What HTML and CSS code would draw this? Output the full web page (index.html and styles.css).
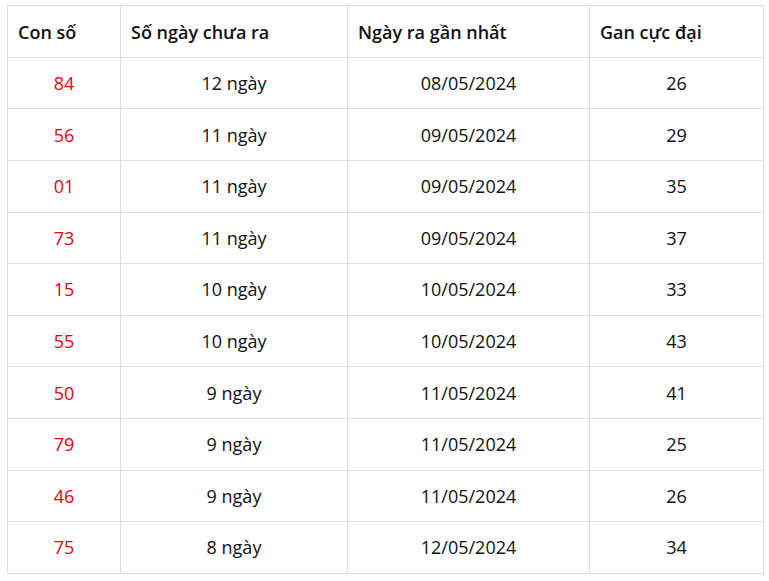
FILE: index.html
```html
<!DOCTYPE html>
<html lang="vi">
<head>
<meta charset="utf-8">
<title>Lô gan</title>
<link rel="stylesheet" href="styles.css">
</head>
<body>
<div class="wrap">
<table class="gan">
<colgroup>
<col class="c1"><col class="c2"><col class="c3"><col class="c4">
</colgroup>
<thead>
<tr><th>Con số</th><th>Số ngày chưa ra</th><th>Ngày ra gần nhất</th><th>Gan cực đại</th></tr>
</thead>
<tbody>
<tr><td class="num">84</td><td>12 ngày</td><td>08/05/2024</td><td>26</td></tr>
<tr><td class="num">56</td><td>11 ngày</td><td>09/05/2024</td><td>29</td></tr>
<tr><td class="num">01</td><td>11 ngày</td><td>09/05/2024</td><td>35</td></tr>
<tr><td class="num">73</td><td>11 ngày</td><td>09/05/2024</td><td>37</td></tr>
<tr><td class="num">15</td><td>10 ngày</td><td>10/05/2024</td><td>33</td></tr>
<tr><td class="num">55</td><td>10 ngày</td><td>10/05/2024</td><td>43</td></tr>
<tr><td class="num">50</td><td>9 ngày</td><td>11/05/2024</td><td>41</td></tr>
<tr><td class="num">79</td><td>9 ngày</td><td>11/05/2024</td><td>25</td></tr>
<tr><td class="num">46</td><td>9 ngày</td><td>11/05/2024</td><td>26</td></tr>
<tr><td class="num">75</td><td>8 ngày</td><td>12/05/2024</td><td>34</td></tr>
</tbody>
</table>
</div>
</body>
</html>
```
FILE: styles.css
```css
html, body {
  margin: 0;
  padding: 0;
  background: #fff;
}
.wrap {
  padding: 5px 7px 0 7px;
}
.gan {
  width: 756px;
  border-collapse: collapse;
  table-layout: fixed;
  font-family: "Open Sans", "Noto Sans", sans-serif;
  font-size: 18px;
  color: #111;
}
.c1 { width: 113px; }
.c2 { width: 227px; }
.c3 { width: 242px; }
.c4 { width: 174px; }
.gan th, .gan td {
  border: 1px solid #dedede;
  padding: 0 10px;
}
.gan th {
  height: 48.8px;
  padding-top: 2px;
  text-align: left;
  font-weight: 600;
}
.gan td {
  height: 50.6px;
  text-align: center;
}
.gan td.num {
  color: #e80010;
}
```
